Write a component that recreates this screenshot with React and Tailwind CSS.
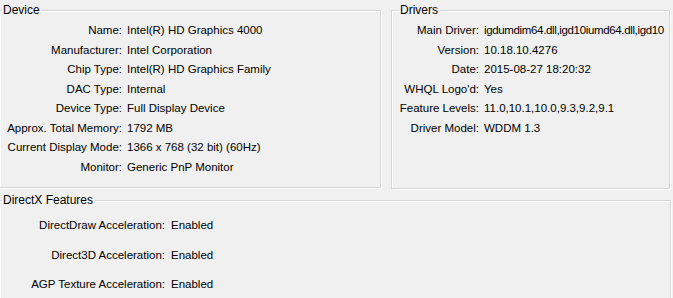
import React from "react";

const device = [
  ["Name:", "Intel(R) HD Graphics 4000"],
  ["Manufacturer:", "Intel Corporation"],
  ["Chip Type:", "Intel(R) HD Graphics Family"],
  ["DAC Type:", "Internal"],
  ["Device Type:", "Full Display Device"],
  ["Approx. Total Memory:", "1792 MB"],
  ["Current Display Mode:", "1366 x 768 (32 bit) (60Hz)"],
  ["Monitor:", "Generic PnP Monitor"],
];

const drivers = [
  ["Main Driver:", "igdumdim64.dll,igd10iumd64.dll,igd10", "tracking-[-0.35px]"],
  ["Version:", "10.18.10.4276"],
  ["Date:", "2015-08-27 18:20:32"],
  ["WHQL Logo'd:", "Yes"],
  ["Feature Levels:", "11.0,10.1,10.0,9.3,9.2,9.1"],
  ["Driver Model:", "WDDM 1.3"],
];

const features = [
  ["DirectDraw Acceleration:", "Enabled"],
  ["Direct3D Acceleration:", "Enabled"],
  ["AGP Texture Acceleration:", "Enabled"],
];

// etched windows group box
const Group = ({ title, className = "", legendClass = "", children }) => (
  <fieldset className={`min-w-0 shrink-0 border border-[#d5d5d5] shadow-[inset_1px_1px_0_#ffffff,1px_1px_0_#ffffff] ${className}`}>
    <legend className={`px-[1px] leading-[14px] text-[12px] ${legendClass}`}>{title}</legend>
    {children}
  </fieldset>
);

const Rows = ({ rows, labelW, rowH, gap = 5, className = "" }) => (
  <div className={`grid ${className}`} style={{ gridTemplateColumns: `${labelW}px minmax(0, 1fr)`, gridAutoRows: `${rowH}px` }}>
    {rows.map(([k, v, extra = ""]) => (
      <React.Fragment key={k}>
        <div className="text-right whitespace-nowrap flex items-center justify-end">{k}</div>
        <div className={`whitespace-nowrap flex items-center ${extra}`} style={{ paddingLeft: gap }}>{v}</div>
      </React.Fragment>
    ))}
  </div>
);

export default function App() {
  return (
    <div
      className="w-[673px] h-[298px] overflow-hidden bg-[#f0f0f0] text-[11.5px] text-black"
      style={{ fontFamily: '"Liberation Sans", Arial, sans-serif' }}
    >
      <div className="flex gap-[10px] pt-[3px]">
        <Group title="Device" className="-ml-[1px] w-[382px] h-[185px]" legendClass="ml-[2px]">
          <Rows rows={device} labelW={122} rowH={19.5} className="pt-[4px]" />
        </Group>
        <Group title="Drivers" className="w-[279px] h-[186px]" legendClass="ml-[7px]">
          <Rows rows={drivers} labelW={87} rowH={19.5} className="pt-[4px]" />
        </Group>
      </div>
      <Group title="DirectX Features" className="-ml-[1px] mt-[4px] w-[672px] h-[120px]" legendClass="ml-[2px]">
        <Rows rows={features} labelW={165} rowH={29.5} gap={6} className="pt-[4px]" />
      </Group>
    </div>
  );
}
